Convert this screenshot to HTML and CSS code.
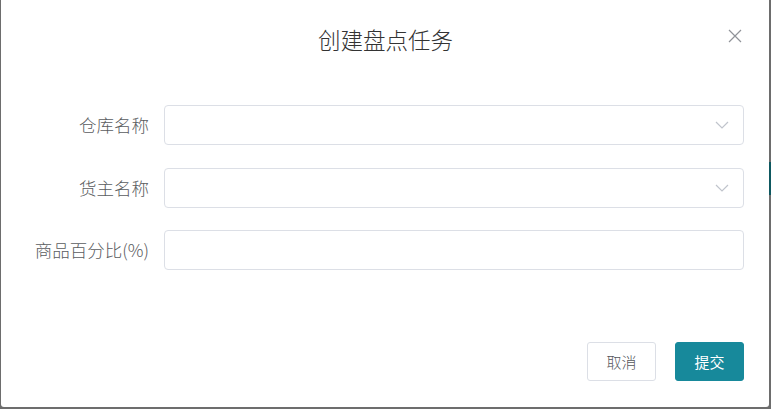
FILE: index.html
```html
<!DOCTYPE html>
<html lang="zh-CN">
<head>
<meta charset="utf-8">
<title>创建盘点任务</title>
<link rel="stylesheet" href="styles.css">
</head>
<body>
<div class="backdrop-hint"></div>
<div class="dialog">
  <div class="dialog-header">
    <span class="dialog-title">创建盘点任务</span>
    <button class="dialog-close" aria-label="关闭">
      <svg width="14" height="14" viewBox="0 0 14 14"><path d="M1 1 L13 13 M13 1 L1 13" stroke="#909399" stroke-width="1.2" fill="none"/></svg>
    </button>
  </div>
  <div class="dialog-body">
    <div class="form-row">
      <label class="form-label">仓库名称</label>
      <div class="form-input select">
        <svg class="chevron" width="14" height="8" viewBox="0 0 14 8"><path d="M1 1 L7 7 L13 1" stroke="#c0c4cc" stroke-width="1.2" fill="none"/></svg>
      </div>
    </div>
    <div class="form-row">
      <label class="form-label">货主名称</label>
      <div class="form-input select">
        <svg class="chevron" width="14" height="8" viewBox="0 0 14 8"><path d="M1 1 L7 7 L13 1" stroke="#c0c4cc" stroke-width="1.2" fill="none"/></svg>
      </div>
    </div>
    <div class="form-row">
      <label class="form-label">商品百分比(%)</label>
      <div class="form-input"></div>
    </div>
  </div>
  <div class="dialog-footer">
    <button class="btn btn-default">取消</button>
    <button class="btn btn-primary">提交</button>
  </div>
</div>
</body>
</html>
```
FILE: styles.css
```css
html, body {
  margin: 0;
  padding: 0;
}
body {
  width: 771px;
  height: 409px;
  background: #6d6d6d;
  overflow: hidden;
  position: relative;
  font-family: "Noto Sans CJK SC", "Liberation Sans", sans-serif;
  padding-left: 1px;
  box-sizing: border-box;
}
.backdrop-hint {
  position: absolute;
  right: 0;
  top: 162px;
  width: 2px;
  height: 33px;
  background: #0e5860;
}
.dialog {
  position: relative;
  width: 768px;
  height: 407px;
  background: #fff;
  border-radius: 0 0 3px 3px;
  display: flex;
  flex-direction: column;
  box-sizing: border-box;
}
.dialog-header {
  position: relative;
  padding-top: 28px;
  height: 50px;
  box-sizing: border-box;
  text-align: center;
}
.dialog-title {
  font-size: 22.5px;
  line-height: 22px;
  color: #333333;
  font-weight: 300;
  display: inline-block;
  padding-left: 1px;
}
.dialog-close {
  position: absolute;
  top: 29px;
  right: 27px;
  width: 14px;
  height: 14px;
  padding: 0;
  border: 0;
  background: none;
  display: flex;
}
.dialog-body {
  padding: 55px 25px 0 0;
  display: flex;
  flex-direction: column;
  gap: 22.5px;
}
.form-row {
  display: flex;
  align-items: center;
  gap: 15px;
}
.form-label {
  flex: 0 0 148px;
  text-align: right;
  font-size: 17.5px;
  font-weight: 300;
  line-height: 40px;
  color: #5a5c60;
  white-space: nowrap;
}
.form-input {
  flex: 1;
  height: 40px;
  border: 1px solid #dcdfe6;
  border-radius: 4px;
  box-sizing: border-box;
  display: flex;
  align-items: center;
  justify-content: flex-end;
  padding-right: 14px;
}
.chevron {
  display: block;
}
.dialog-footer {
  margin-top: auto;
  padding: 0 25px 26px 0;
  display: flex;
  justify-content: flex-end;
  gap: 19px;
}
.btn {
  height: 39px;
  width: 69px;
  padding: 0;
  font-family: "Noto Sans CJK SC", "Liberation Sans", sans-serif;
  font-size: 15px;
  font-weight: 300;
  white-space: nowrap;
  border-radius: 3px;
  box-sizing: border-box;
}
.btn-default {
  background: #fff;
  border: 1px solid #dcdfe6;
  color: #55575b;
}
.btn-primary {
  background: #17899b;
  border: 1px solid #17899b;
  color: #fff;
  font-weight: 400;
}
```
